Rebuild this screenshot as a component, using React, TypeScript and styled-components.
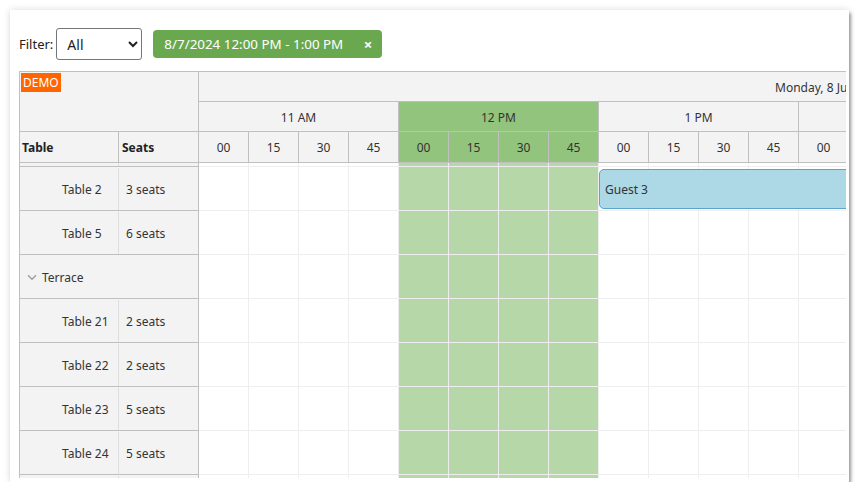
import React from 'react'
import styled, { createGlobalStyle } from 'styled-components'

const GlobalStyle = createGlobalStyle`
  html, body {
    margin: 0;
    padding: 0;
    background: #ffffff;
  }
  body {
    font-family: "Segoe UI", "Noto Sans", sans-serif;
    color: #333333;
  }
`

type Row =
  | { kind: 'table'; name: string; seats: string }
  | { kind: 'group'; name: string }

// first entry is the row scrolled above the viewport, only its bottom edge shows
const rows: Row[] = [
  { kind: 'table', name: '', seats: '' },
  { kind: 'table', name: 'Table 2', seats: '3 seats' },
  { kind: 'table', name: 'Table 5', seats: '6 seats' },
  { kind: 'group', name: 'Terrace' },
  { kind: 'table', name: 'Table 21', seats: '2 seats' },
  { kind: 'table', name: 'Table 22', seats: '2 seats' },
  { kind: 'table', name: 'Table 23', seats: '5 seats' },
  { kind: 'table', name: 'Table 24', seats: '5 seats' },
  { kind: 'table', name: '', seats: '' },
]

const hours = [
  { label: '11 AM', hi: false },
  { label: '12 PM', hi: true },
  { label: '1 PM', hi: false },
  { label: '2 PM', hi: false },
]
const minutes = ['00', '15', '30', '45']

const App = () => {
  return (
    <>
      <GlobalStyle />
      <Frame>
        <Toolbar>
          <FilterLabel>Filter:</FilterLabel>
          <FilterSelect defaultValue="all">
            <option value="all">All</option>
          </FilterSelect>
          <RangeChip>
            <span>8/7/2024 12:00 PM - 1:00 PM</span>
            <ChipClose>×</ChipClose>
          </RangeChip>
        </Toolbar>

        <Scheduler>
          <RowHeader>
            <CornerTop>
              <DemoBadge>DEMO</DemoBadge>
            </CornerTop>
            <ColumnHeads>
              <HeadCell $first>Table</HeadCell>
              <HeadCell>Seats</HeadCell>
            </ColumnHeads>
            <Viewport>
              <Scrolled>
                {rows.map((r, i) =>
                  r.kind === 'group' ? (
                    <ResourceRow key={i}>
                      <GroupName>
                        <svg width="10" height="7" viewBox="0 0 10 7">
                          <path d="M1 1.2 L5 5.2 L9 1.2" fill="none" stroke="#a0a0a0" strokeWidth="1.5" />
                        </svg>
                        {r.name}
                      </GroupName>
                    </ResourceRow>
                  ) : (
                    <ResourceRow key={i}>
                      <NameCell>{r.name}</NameCell>
                      <SeatsCell>{r.seats}</SeatsCell>
                    </ResourceRow>
                  )
                )}
              </Scrolled>
            </Viewport>
          </RowHeader>

          <TimeArea>
            <DayRow>
              <DayLabel>Monday, 8 July 2024</DayLabel>
            </DayRow>
            <HeaderRow>
              {hours.map((h) => (
                <HourCell key={h.label} $hi={h.hi}>{h.label}</HourCell>
              ))}
            </HeaderRow>
            <MinuteRow>
              {hours.map((h) =>
                minutes.map((m) => (
                  <MinuteCell key={h.label + m} $hi={h.hi}>{m}</MinuteCell>
                ))
              )}
            </MinuteRow>
            <Viewport>
              <Scrolled>
                {rows.map((r, i) => (
                  <GridRow key={i}>
                    {hours.map((h) =>
                      minutes.map((m) => <GridCell key={h.label + m} $hi={h.hi} />)
                    )}
                    {r.kind === 'table' && r.name === 'Table 2' && (
                      <Reservation>Guest 3</Reservation>
                    )}
                  </GridRow>
                ))}
              </Scrolled>
            </Viewport>
          </TimeArea>
        </Scheduler>
      </Frame>
    </>
  )
}

export default App

const Frame = styled.div`
  box-sizing: border-box;
  margin: 10px 0 0 10px;
  width: 839px;
  height: 472px;
  padding: 18px 0 0 9px;
  background: #ffffff;
  box-shadow: 2px 3px 3px rgba(0, 0, 0, 0.35), 0 0 7px rgba(0, 0, 0, 0.14);
  overflow: hidden;
`

const Toolbar = styled.div`
  display: flex;
  align-items: center;
  height: 32px;
`

const FilterLabel = styled.span`
  font-size: 13px;
  color: #222;
  margin-right: 3px;
`

const FilterSelect = styled.select`
  box-sizing: border-box;
  width: 86px;
  height: 32px;
  padding: 0 6px;
  font-family: inherit;
  font-size: 14px;
  color: #222;
  background: #fff;
  border: 1px solid #767676;
  border-radius: 3px;
`

const RangeChip = styled.div`
  box-sizing: border-box;
  display: flex;
  align-items: center;
  justify-content: space-between;
  margin-left: 11px;
  width: 229px;
  height: 28px;
  padding: 0 10px 0 11px;
  background: #6aa84f;
  border-radius: 4px;
  color: #ffffff;
  font-size: 13.4px;
`

const ChipClose = styled.span`
  font-size: 15px;
  font-weight: bold;
  line-height: 1;
`

const Scheduler = styled.div`
  box-sizing: border-box;
  display: flex;
  margin-top: 11px;
  width: 827px;
  height: 407px;
  border-top: 1px solid #c0c0c0;
  border-left: 1px solid #c0c0c0;
  overflow: hidden;
  font-size: 12px;
  color: #333;
`

const RowHeader = styled.div`
  box-sizing: border-box;
  flex: 0 0 179px;
  display: flex;
  flex-direction: column;
  background: #f3f3f3;
  border-right: 1px solid #c0c0c0;
`

const CornerTop = styled.div`
  box-sizing: border-box;
  height: 60px;
  padding: 1px 0 0 1px;
  border-bottom: 1px solid #c0c0c0;
`

const DemoBadge = styled.span`
  display: inline-block;
  background: #ff6600;
  color: #ffffff;
  font-size: 12px;
  line-height: 19px;
  padding: 0 2px;
`

const ColumnHeads = styled.div`
  box-sizing: border-box;
  display: flex;
  height: 31px;
  border-bottom: 1px solid #c0c0c0;
`

const HeadCell = styled.div<{ $first?: boolean }>`
  box-sizing: border-box;
  flex: ${({ $first }) => ($first ? '0 0 99px' : '1')};
  display: flex;
  align-items: center;
  padding: 1px 0 0 ${({ $first }) => ($first ? '2px' : '3px')};
  font-weight: bold;
  color: #222;
  border-right: ${({ $first }) => ($first ? '1px solid #c0c0c0' : 'none')};
`

const Viewport = styled.div`
  flex: 1;
  overflow: hidden;
`

const Scrolled = styled.div`
  margin-top: -40px;
`

const ResourceRow = styled.div`
  box-sizing: border-box;
  display: flex;
  height: 44px;
  padding-top: 1px;
  border-bottom: 1px solid #c0c0c0;
`

const NameCell = styled.div`
  box-sizing: border-box;
  flex: 0 0 99px;
  display: flex;
  align-items: center;
  padding-left: 42px;
  border-right: 1px solid #dedede;
`

const SeatsCell = styled.div`
  flex: 1;
  display: flex;
  align-items: center;
  padding-left: 7px;
`

const GroupName = styled.div`
  display: flex;
  align-items: center;
  gap: 5px;
  padding-left: 7px;
`

const TimeArea = styled.div`
  flex: 1;
  min-width: 0;
  display: flex;
  flex-direction: column;
  overflow: hidden;
`

const DayRow = styled.div`
  box-sizing: border-box;
  height: 30px;
  display: flex;
  align-items: center;
  padding: 1px 0 0 576px;
  background: #f3f3f3;
  border-bottom: 1px solid #c0c0c0;
  white-space: nowrap;
`

const DayLabel = styled.span`
  color: #333;
`

const HeaderRow = styled.div`
  box-sizing: border-box;
  display: flex;
  height: 30px;
  border-bottom: 1px solid #c0c0c0;
`

const MinuteRow = styled(HeaderRow)`
  height: 31px;
`

interface HiProps {
  $hi: boolean
}

const HourCell = styled.div<HiProps>`
  box-sizing: border-box;
  flex: 0 0 200px;
  display: flex;
  align-items: center;
  justify-content: center;
  padding-top: 1px;
  background: ${({ $hi }) => ($hi ? '#93c47d' : '#f3f3f3')};
  border-right: 1px solid #c0c0c0;
`

const MinuteCell = styled(HourCell)`
  flex-basis: 50px;
`

const GridRow = styled.div`
  position: relative;
  box-sizing: border-box;
  display: flex;
  height: 44px;
  border-bottom: 1px solid #eeeeee;
`

const GridCell = styled.div<HiProps>`
  box-sizing: border-box;
  flex: 0 0 50px;
  background: ${({ $hi }) => ($hi ? '#b6d7a8' : '#ffffff')};
  border-right: 1px solid #eeeeee;
`

const Reservation = styled.div`
  position: absolute;
  box-sizing: border-box;
  left: 400px;
  top: 2px;
  width: 420px;
  height: 40px;
  display: flex;
  align-items: center;
  padding: 1px 0 0 5px;
  background: #add8e6;
  border: 1px solid #5aa5cc;
  border-radius: 5px;
  color: #333;
`
